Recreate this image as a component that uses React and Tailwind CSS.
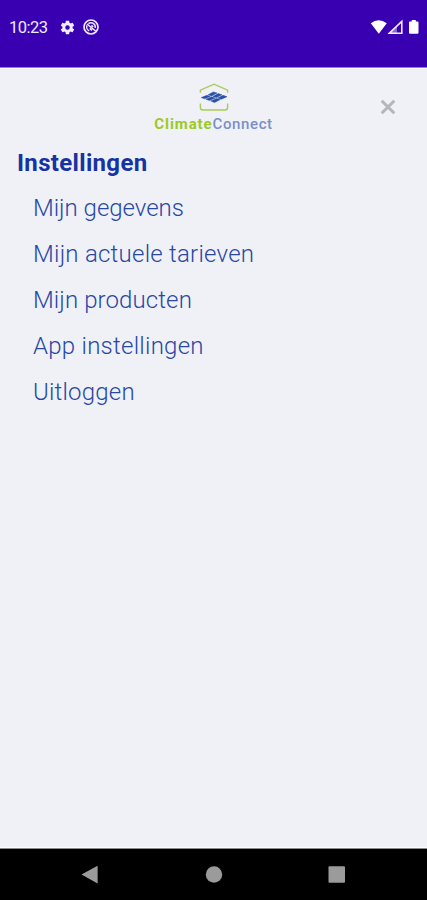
const menuItems = [
  { label: "Mijn gegevens", tracking: "tracking-[-0.02px]" },
  { label: "Mijn actuele tarieven", tracking: "tracking-[0.24px]" },
  { label: "Mijn producten", tracking: "tracking-[0.1px]" },
  { label: "App instellingen", tracking: "tracking-[0.26px]" },
  { label: "Uitloggen", tracking: "tracking-[0.2px]" },
];

const GearIcon = () => (
  <svg viewBox="0 0 24 24" className="w-[17px] h-[17px]" fill="#f1edff">
    <path d="M19.14 12.94c.04-.3.06-.61.06-.94 0-.32-.02-.64-.07-.94l2.03-1.58a.49.49 0 0 0 .12-.61l-1.92-3.32a.488.488 0 0 0-.59-.22l-2.39.96c-.5-.38-1.03-.7-1.62-.94l-.36-2.54a.484.484 0 0 0-.48-.41h-3.84c-.24 0-.43.17-.47.41l-.36 2.54c-.59.24-1.13.57-1.62.94l-2.39-.96c-.22-.08-.47 0-.59.22L2.74 8.87c-.12.21-.08.47.12.61l2.03 1.58c-.05.3-.09.63-.09.94s.02.64.07.94l-2.03 1.58a.49.49 0 0 0-.12.61l1.92 3.32c.12.22.37.29.59.22l2.39-.96c.5.38 1.03.7 1.62.94l.36 2.54c.05.24.24.41.48.41h3.84c.24 0 .44-.17.47-.41l.36-2.54c.59-.24 1.13-.56 1.62-.94l2.39.96c.22.08.47 0 .59-.22l1.92-3.32c.12-.22.07-.47-.12-.61l-2.01-1.58zM12 15.2A3.2 3.2 0 1 1 12 8.8a3.2 3.2 0 0 1 0 6.4z" />
  </svg>
);

const BlockedIcon = () => (
  <svg viewBox="0 0 16 16" className="w-4 h-4" fill="none" stroke="#eee9ff">
    <circle cx="8" cy="8" r="7" strokeWidth="1.7" />
    <path d="M6.2 11.9A4.3 4.3 0 0 1 4 6.4M5.4 4.6A4.3 4.3 0 0 1 12.2 8.8" strokeWidth="1.5" />
    <path d="M4 5L12.6 12M6.8 9.4L9 11.4M8.4 6.4L10.2 7.8" strokeWidth="1.6" />
  </svg>
);

const StatusBar = () => (
  <header className="flex justify-between h-[68px] bg-[#3900b2] border-b border-[#8d82d9] pt-[19px] pl-[9px] pr-[7px]">
    <div className="flex items-center h-4">
      <span className="w-[50px] pt-0.5 text-[16.5px] leading-4 tracking-[-0.5px] text-[#eeeaff]">10:23</span>
      <GearIcon />
      <span className="w-[7px]" />
      <BlockedIcon />
    </div>
    <svg viewBox="0 0 50 16" className="w-[50px] h-4" fill="#fff">
      <path d="M0.8 4.3Q8.5 -1.8 16.8 4.3L8.8 14.8Z" />
      <path d="M19.4 14.2L31.8 2.4V14.2Z" fill="none" stroke="#eee9ff" strokeWidth="1.6" />
      <path d="M27 7V14.4H19.5Z" opacity="0.4" />
      <path d="M39.8 2.6H41.8V1H45.8V2.6H47.6Q48.5 2.6 48.5 3.5V13.8Q48.5 14.8 47.5 14.8H40Q39 14.8 39 13.8V3.5Q39 2.6 39.8 2.6Z" />
    </svg>
  </header>
);

const Logo = () => (
  <div className="flex flex-col items-center">
    <svg viewBox="0 0 30 28" className="w-[30px] h-7" fill="none">
      <path d="M1.4 9.7V7.2L15 1.2L28.6 7.2V9.7M1.4 20.5V24.5Q1.4 27 3.9 27H26.1Q28.6 27 28.6 24.5V20.5" stroke="#a9ca58" strokeWidth="1.4" />
      <path d="M2.2 14.6L8 12.3L11.3 13.4L5.7 15.8ZM9.2 11.8L14.2 8.9L18 10L12.6 12.9ZM6.9 16.2L12.6 13.8L16.3 15L10.5 17.5ZM13.9 13.4L19.2 10.5L22.9 11.8L17.5 14.5ZM11.8 18L17.6 15.4L21.3 16.6L15.5 19.6ZM18.8 14.9L24 12.3L28 13.7L22.4 16.2Z" fill="#2850a8" stroke="#2850a8" strokeWidth="0.5" />
    </svg>
    <div className="mt-1 text-[15px] leading-[18px] whitespace-nowrap">
      <span className="font-bold tracking-[0.9px] text-[#9cc923]">Climate</span>
      <span className="font-medium tracking-[0.6px] text-[#7a8fc9]">Connect</span>
    </div>
  </div>
);

const CloseButton = () => (
  <button aria-label="Sluiten" className="flex justify-center items-center w-4 h-4">
    <svg viewBox="0 0 16 16" className="w-4 h-4" stroke="#b4b6ba" strokeWidth="3">
      <path d="M1.7 1.7L14.3 14.3M14.3 1.7L1.7 14.3" />
    </svg>
  </button>
);

const NavigationBar = () => (
  <footer className="h-[52px] bg-black border-t border-[#8a8a8d] flex justify-center">
    <svg viewBox="0 0 427 51" className="w-[427px] h-[51px]" fill="#9b9b9b">
      <path d="M81.5 25.5L97.6 16.8V34.4Z" />
      <circle cx="214" cy="25.5" r="8.2" />
      <rect x="328.5" y="17.3" width="16.5" height="16.5" rx="1" />
    </svg>
  </footer>
);

export default function App() {
  return (
    <div className="flex flex-col w-[427px] h-[900px] overflow-hidden bg-[#eff1f6] font-['Roboto',sans-serif]">
      <StatusBar />
      <main className="flex-1 border-y border-[#fbfcfd]">
        <div className="grid grid-cols-[1fr_120px_1fr] pt-[14px] h-[76px]">
          <span />
          <Logo />
          <div className="flex justify-end pt-4 pr-[31.5px]">
            <CloseButton />
          </div>
        </div>
        <h1 className="pl-[17px] text-[24px] leading-9 font-bold tracking-[0.33px] text-[#1733a2]">Instellingen</h1>
        <nav className="flex flex-col pt-1 pl-[33px]">
          {menuItems.map(({ label, tracking }) => (
            <a key={label} className={`h-[46px] leading-[47px] text-[24px] font-light whitespace-nowrap text-[#2947a5] ${tracking}`}>
              {label}
            </a>
          ))}
        </nav>
      </main>
      <NavigationBar />
    </div>
  );
}
